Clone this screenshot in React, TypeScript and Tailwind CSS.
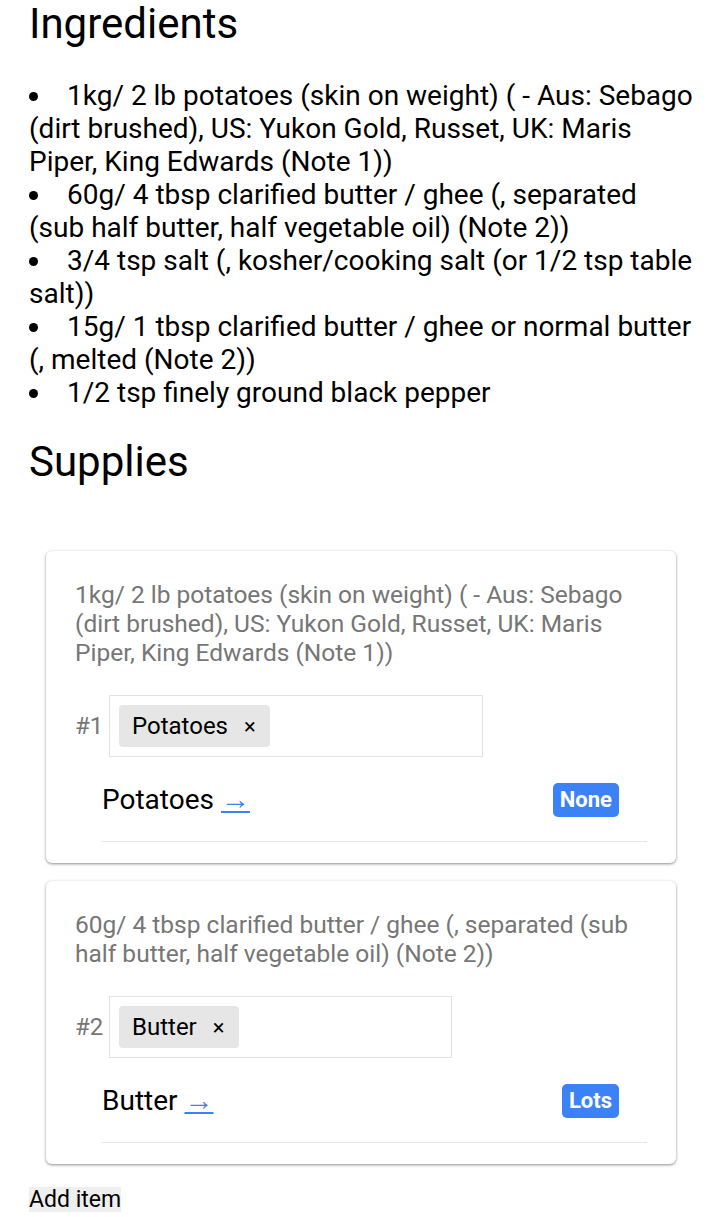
import React from 'react';

const ingredients = [
  '1kg/ 2 lb potatoes (skin on weight) ( - Aus: Sebago (dirt brushed), US: Yukon Gold, Russet, UK: Maris Piper, King Edwards (Note 1))',
  '60g/ 4 tbsp clarified butter / ghee (, separated (sub half butter, half vegetable oil) (Note 2))',
  '3/4 tsp salt (, kosher/cooking salt (or 1/2 tsp table salt))',
  '15g/ 1 tbsp clarified butter / ghee or normal butter (, melted (Note 2))',
  '1/2 tsp finely ground black pepper',
];

const supplies = [
  {
    text: '1kg/ 2 lb potatoes (skin on weight) ( - Aus: Sebago (dirt brushed), US: Yukon Gold, Russet, UK: Maris Piper, King Edwards (Note 1))',
    tag: 'Potatoes',
    amount: 'None',
  },
  {
    text: '60g/ 4 tbsp clarified butter / ghee (, separated (sub half butter, half vegetable oil) (Note 2))',
    tag: 'Butter',
    amount: 'Lots',
  },
];

const SupplyCard: React.FC<{ index: number; text: string; tag: string; amount: string }> = ({ index, text, tag, amount }) => (
  <div className="mx-[17px] rounded-[6px] bg-white pt-[29px] pb-[21px] pl-[29px] pr-[29px] shadow-[0_1px_3px_rgba(0,0,0,0.45)]">
    <p className="text-[24.5px] leading-[29px] text-[#767676]">{text}</p>
    <div className="mt-[28px] flex items-center">
      <span className="w-[34px] text-[24px] text-[#767676]">#{index}</span>
      <div className="flex h-[62px] items-center border border-[#e2e2e2] pl-[9px]">
        <span className="flex h-[42px] items-center rounded-[4px] bg-[#e6e6e6] pl-[13px] pr-[14px] text-[24px] text-black">
          {tag}
          <span className="ml-[16px] text-[22px]">×</span>
        </span>
        <span className="w-[212px]" />
      </div>
    </div>
    <div className="ml-[27px] mt-[25px] flex items-center justify-between border-b border-[#e6e6e6] pb-[24px]">
      <span className="text-[28px] leading-[34px] text-black">
        {tag}{' '}
        <a href="#" className="text-[29px] text-[#3b82f6] underline">→</a>
      </span>
      <span className="mr-[28px] rounded-[5px] bg-[#3b82f6] px-[7px] text-[22px] font-bold leading-[34px] text-white">{amount}</span>
    </div>
  </div>
);

export default function App() {
  return (
    <div className="min-h-screen bg-white px-[29px] text-black" style={{ fontFamily: 'Roboto, "Noto Sans", sans-serif' }}>
      <h2 className="text-[42px] leading-[48px]">Ingredients</h2>
      <ul className="mt-[31px] list-inside list-disc text-[28px] leading-[33px]">
        {ingredients.map((item, i) => (
          <li key={i}>{item}</li>
        ))}
      </ul>
      <h2 className="mt-[29px] text-[42px] leading-[48px]">Supplies</h2>
      <div className="mt-[65px] flex flex-col gap-[18px]">
        {supplies.map((s, i) => (
          <SupplyCard key={i} index={i + 1} {...s} />
        ))}
      </div>
      <button className="mt-[23px] bg-[#efefef] text-[23px] leading-[25px]">Add item</button>
    </div>
  );
}
